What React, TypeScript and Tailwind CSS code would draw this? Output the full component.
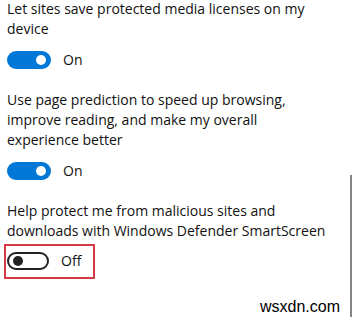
import React from "react";

type ToggleProps = { on: boolean };

function Toggle({ on }: ToggleProps) {
  return on ? (
    <span className="relative block w-[44px] h-[18px] rounded-full bg-[#0078d7]">
      <span className="absolute right-[5px] top-[4px] w-[10px] h-[10px] rounded-full bg-white" />
    </span>
  ) : (
    <span className="relative block w-[42px] h-[18px] rounded-full border-2 border-[#222]">
      <span className="absolute left-[4px] top-[2px] w-[10px] h-[10px] rounded-full bg-[#222]" />
    </span>
  );
}

function Setting({ lines, on, boxed }: { lines: string[]; on: boolean; boxed?: boolean }) {
  return (
    <div>
      <div className="text-[14px] leading-[20px] text-[#111] whitespace-nowrap">
        {lines.map((l) => (
          <p key={l}>{l}</p>
        ))}
      </div>
      <div
        className={
          boxed
            ? "mt-[3px] -ml-[3px] w-[91px] border-2 border-[#d63a42] pt-[6px] pb-[7px] pl-[1px] flex items-center gap-[12px]"
            : "mt-[12px] flex items-center gap-[12px]"
        }
      >
        <Toggle on={on} />
        <span className="text-[14px] leading-[18px] text-[#111]">{on ? "On" : "Off"}</span>
      </div>
    </div>
  );
}

export default function App() {
  return (
    <div
      className="relative w-[352px] h-[317px] bg-white overflow-hidden"
      style={{ fontFamily: '"Open Sans", "Noto Sans", sans-serif' }}
    >
      <div className="flex flex-col gap-[21px] pl-[7px] -mt-[1px]">
        <Setting lines={["Let sites save protected media licenses on my", "device"]} on />
        <Setting
          lines={[
            "Use page prediction to speed up browsing,",
            "improve reading, and make my overall",
            "experience better",
          ]}
          on
        />
        <Setting
          lines={["Help protect me from malicious sites and", "downloads with Windows Defender SmartScreen"]}
          on={false}
          boxed
        />
      </div>
      <div className="absolute right-0 top-[175px] w-[2px] h-[142px] bg-[#858585]" />
      <span
        className="absolute right-[12px] bottom-[2px] text-[16px] leading-[16px] text-black"
        style={{ fontFamily: '"Liberation Sans", Arial, sans-serif' }}
      >
        wsxdn.com
      </span>
    </div>
  );
}
